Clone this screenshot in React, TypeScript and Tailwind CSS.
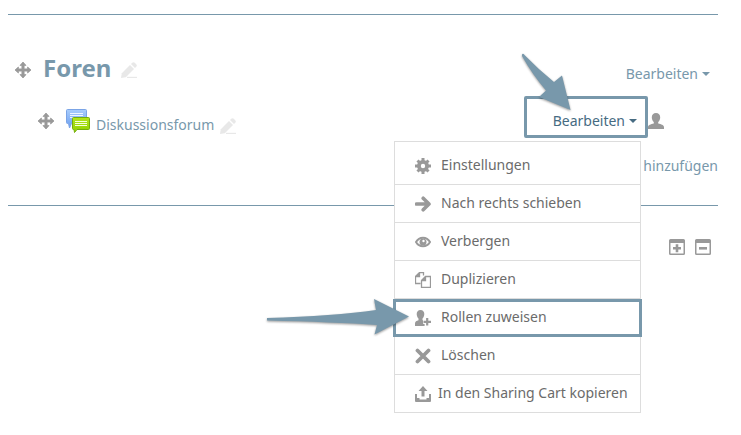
import { ReactNode } from 'react';

interface MenuEntry {
  label: string;
  icon: ReactNode;
  highlighted?: boolean;
  tight?: boolean;
}

const Icon = ({ children, className = 'text-[#999]' }: { children: ReactNode; className?: string }) => (
  <svg viewBox="0 0 16 16" fill="currentColor" className={`h-4 w-4 shrink-0 ${className}`} aria-hidden="true">
    {children}
  </svg>
);

const MoveIcon = () => (
  <Icon>
    <path d="M8 0l3 3.4H9.1v3.5h3.5V5L16 8l-3.4 3V9.100H9.100v3.500H11L8 16l-3-3.400h1.900V9.100H3.400V11L0 8l3.400-3v1.900h3.500V3.400H5z" stroke="currentColor" strokeWidth="0.8" strokeLinejoin="round" />
  </Icon>
);

const PencilIcon = () => (
  <Icon className="text-[#e8e8e8]">
    <path d="M0 16l.8-4.800L9 3l4 4-8.200 8.200z" />
    <path d="M10 2l1.200-1.200q1.300-1.300 2.600 0l1.400 1.400q1.300 1.300 0 2.600L14 6z" />
    <path d="M6 14.800H16V16H6z" />
  </Icon>
);

const ForumIcon = () => (
  <svg viewBox="0 0 24 24" className="h-6 w-6 shrink-0" aria-hidden="true">
    <defs>
      <linearGradient id="forum-blue" x1="0" y1="0" x2="0" y2="1">
        <stop offset="0" stopColor="#a9cdfc" />
        <stop offset="1" stopColor="#6a9df0" />
      </linearGradient>
      <linearGradient id="forum-green" x1="0" y1="0" x2="0" y2="1">
        <stop offset="0" stopColor="#b4e51b" />
        <stop offset="1" stopColor="#8fd000" />
      </linearGradient>
    </defs>
    <path d="M1.500.5h18q1 0 1 1v12q0 1-1 1H5.500L3.500 19 2.500 14.500H1.500q-1 0-1-1v-12q0-1 1-1z" fill="url(#forum-blue)" stroke="#7ba4e6" />
    <path d="M4 4.500h13M4 6.500h13M4 8.500h13" stroke="#eef5ff" />
    <path d="M7.500 8.500h15q1 0 1 1v10q0 1-1 1H11L8.500 23.500 8 20.500h-.5q-1 0-1-1v-10q0-1 1-1z" fill="url(#forum-green)" stroke="#74ad0c" />
    <path d="M9 12.500h12M9 14.500h12M9 16.500h12" stroke="#f5ffd8" />
  </svg>
);

const UserIcon = () => (
  <Icon>
    <path d="M8 0c2.600 0 4.200 1.700 4.200 4.200 0 2-.8 3.800-2 4.800v1.400c2.900.6 5.800 1.600 5.800 3.600v2H0v-2c0-2 2.900-3 5.800-3.600V9c-1.200-1-2-2.800-2-4.800C3.800 1.700 5.400 0 8 0z" />
  </Icon>
);

const entries: MenuEntry[] = [
  {
    label: 'Einstellungen',
    icon: (
      <Icon>
        <circle cx="8" cy="8" r="4.100" fill="none" stroke="currentColor" strokeWidth="3.800" />
        <path d="M8 0v3.500M8 12.500V16M0 8h3.500M12.500 8H16M2.500 2.500L5 5M11 11l2.500 2.500M13.500 2.500L11 5M5 11l-2.500 2.500" stroke="currentColor" strokeWidth="3" />
      </Icon>
    ),
  },
  {
    label: 'Nach rechts schieben',
    icon: (
      <Icon>
        <path d="M1.500 8h12M8.200 2.200L14 8l-5.800 5.800" fill="none" stroke="currentColor" strokeWidth="3.600" strokeLinecap="round" strokeLinejoin="round" />
      </Icon>
    ),
  },
  {
    label: 'Verbergen',
    icon: (
      <Icon>
        <path d="M1 8c1.700-3 4.200-4.300 7-4.300S13.300 5 15 8c-1.700 3-4.200 4.300-7 4.300S2.700 11 1 8z" fill="none" stroke="currentColor" strokeWidth="2" />
        <circle cx="8" cy="8" r="3.500" />
        <circle cx="8.500" cy="7" r="1.200" fill="#fff" />
      </Icon>
    ),
  },
  {
    label: 'Duplizieren',
    icon: (
      <Icon>
        <path d="M5.500 11.500h-5v-7l4-4h4v3M4.500.5v4h-4M6.500 8.500l4-4h5v11h-9zM10.500 4.500v4h-4" fill="none" stroke="currentColor" strokeWidth="1.300" />
        <path d="M.5 4.500l4-4v4zM6.500 8.500l4-4v4z" />
      </Icon>
    ),
  },
  {
    label: 'Rollen zuweisen',
    highlighted: true,
    icon: (
      <Icon>
        <path d="M5.500 0C8 0 9.300 1.700 9.300 4c0 1.900-.7 3.500-1.800 4.500v1.700c.8.1 1.100.3 1.100.8v2.800h1V16H0v-2.500c0-1.900 1.600-2.800 3.500-3.300V8.500C2.400 7.500 1.700 5.900 1.700 4 1.700 1.700 3 0 5.500 0z" />
        <path d="M8 11.800h8M12.200 7.500V16" stroke="#fff" strokeWidth="4" />
        <path d="M8.500 11.800H16M12.200 8v7.600" stroke="currentColor" strokeWidth="2.200" />
      </Icon>
    ),
  },
  {
    label: 'Löschen',
    icon: (
      <Icon>
        <path d="M2.500 2.500l11 11M13.500 2.500l-11 11" fill="none" stroke="currentColor" strokeWidth="3.800" strokeLinecap="round" />
      </Icon>
    ),
  },
  {
    label: 'In den Sharing Cart kopieren',
    tight: true,
    icon: (
      <Icon>
        <path d="M8 0l4.500 5H9.500v5.500h-3V5h-3z" />
        <path d="M1 8v7h14V8" fill="none" stroke="currentColor" strokeWidth="2" strokeLinejoin="round" />
        <path d="M1 12h3.500v1.500h7V12H15v3H1z" />
      </Icon>
    ),
  },
];

const Caret = () => <span className="ml-1 border-x-4 border-t-4 border-x-transparent border-t-current" />;

const ActionMenu = () => (
  <ul className="absolute top-[45px] right-[7px] w-[247px] border border-b-0 border-[#ddd] bg-white pt-[5px] text-[#6b6b6b]">
    {entries.map((entry) => (
      <li key={entry.label} className="relative h-[38px] border-b border-[#ddd]">
        {entry.highlighted && (
          <>
            <span className="pointer-events-none absolute -inset-x-0.5 top-0 -bottom-px border-[3px] border-[#7898ab]" />
            <svg
              viewBox="0 0 150 46"
              className="pointer-events-none absolute -top-1 -left-[131px] h-[46px] w-[150px] drop-shadow-[0_1px_1px_rgba(0,0,0,0.4)]"
              aria-hidden="true"
            >
              <path d="M3 23Q70 21 112 15L110 4l35 17.500L110.500 39.500 113 30Q70 27 3 25.500z" fill="#7898ab" />
            </svg>
          </>
        )}
        <a href="#" className={`flex h-full items-center pl-5 ${entry.tight ? 'gap-[7px]' : 'gap-2.5'}`}>
          {entry.icon}
          <span className="pb-0.5">{entry.label}</span>
        </a>
      </li>
    ))}
  </ul>
);

const App = () => {
  return (
    <main className="min-h-screen bg-white pt-3.5 pr-[23px] pl-2 font-['Noto_Sans',sans-serif] text-sm text-[#7898ab]">
      <section className="border-y border-[#7898ab]">
        <div className="flex h-[81px] items-end justify-between pr-2 pb-2 pl-[7px]">
          <div className="flex items-center">
            <MoveIcon />
            <h2 className="mr-2.5 ml-3 pb-1 text-2xl font-bold">Foren</h2>
            <PencilIcon />
          </div>
          <button type="button" className="mb-1 flex items-center">
            Bearbeiten
            <Caret />
          </button>
        </div>

        <div className="flex h-[42px] items-center pl-[30px]">
          <div className="flex items-center pt-2">
            <MoveIcon />
            <a href="#" className="mr-1.5 ml-3 flex items-center gap-1.5">
              <ForumIcon />
              <span className="pt-2">Diskussionsforum</span>
            </a>
            <div className="pt-2.5">
              <PencilIcon />
            </div>
          </div>
          <div className="relative ml-auto">
            <button
              type="button"
              className="flex h-[42px] w-[124px] items-center justify-end rounded-xs border-[3px] border-[#7898ab] pt-2 pr-2 text-[#466b82]"
            >
              Bearbeiten
              <Caret />
            </button>
            <ActionMenu />
            <svg
              viewBox="0 0 60 70"
              className="pointer-events-none absolute -top-[46px] -left-1 h-[70px] w-[60px] drop-shadow-[0_1px_1px_rgba(0,0,0,0.4)]"
              aria-hidden="true"
            >
              <path d="M2 4.500Q3 3 4.500 5 18 19 34 32l8-6.500L50.500 60 19 47l7-6.500Q12 24 2 6z" fill="#7898ab" />
            </svg>
          </div>
          <div className="mr-[54px] pt-2">
            <UserIcon />
          </div>
        </div>

        <div className="flex h-[67px] items-center justify-end pb-3">
          <a href="#">Aktivität hinzufügen</a>
        </div>
      </section>

      <div className="flex justify-end gap-2.5 pt-[33px] pr-[7px]">
        <button type="button" aria-label="Alles aufklappen">
          <Icon>
            <path fillRule="evenodd" d="M1.500 0h13Q16 0 16 1.500v13q0 1.500-1.500 1.500h-13Q0 16 0 14.500v-13Q0 0 1.500 0zM1.500 4v10.500h13V4z" />
            <path d="M4 9.300h8M8 5.300v8" stroke="currentColor" strokeWidth="2.600" />
          </Icon>
        </button>
        <button type="button" aria-label="Alles einklappen">
          <Icon>
            <path fillRule="evenodd" d="M1.500 0h13Q16 0 16 1.500v13q0 1.500-1.500 1.500h-13Q0 16 0 14.500v-13Q0 0 1.500 0zM1.500 4v10.500h13V4z" />
            <path d="M4 9.300h8" stroke="currentColor" strokeWidth="2.600" />
          </Icon>
        </button>
      </div>
    </main>
  );
};

export default App;
